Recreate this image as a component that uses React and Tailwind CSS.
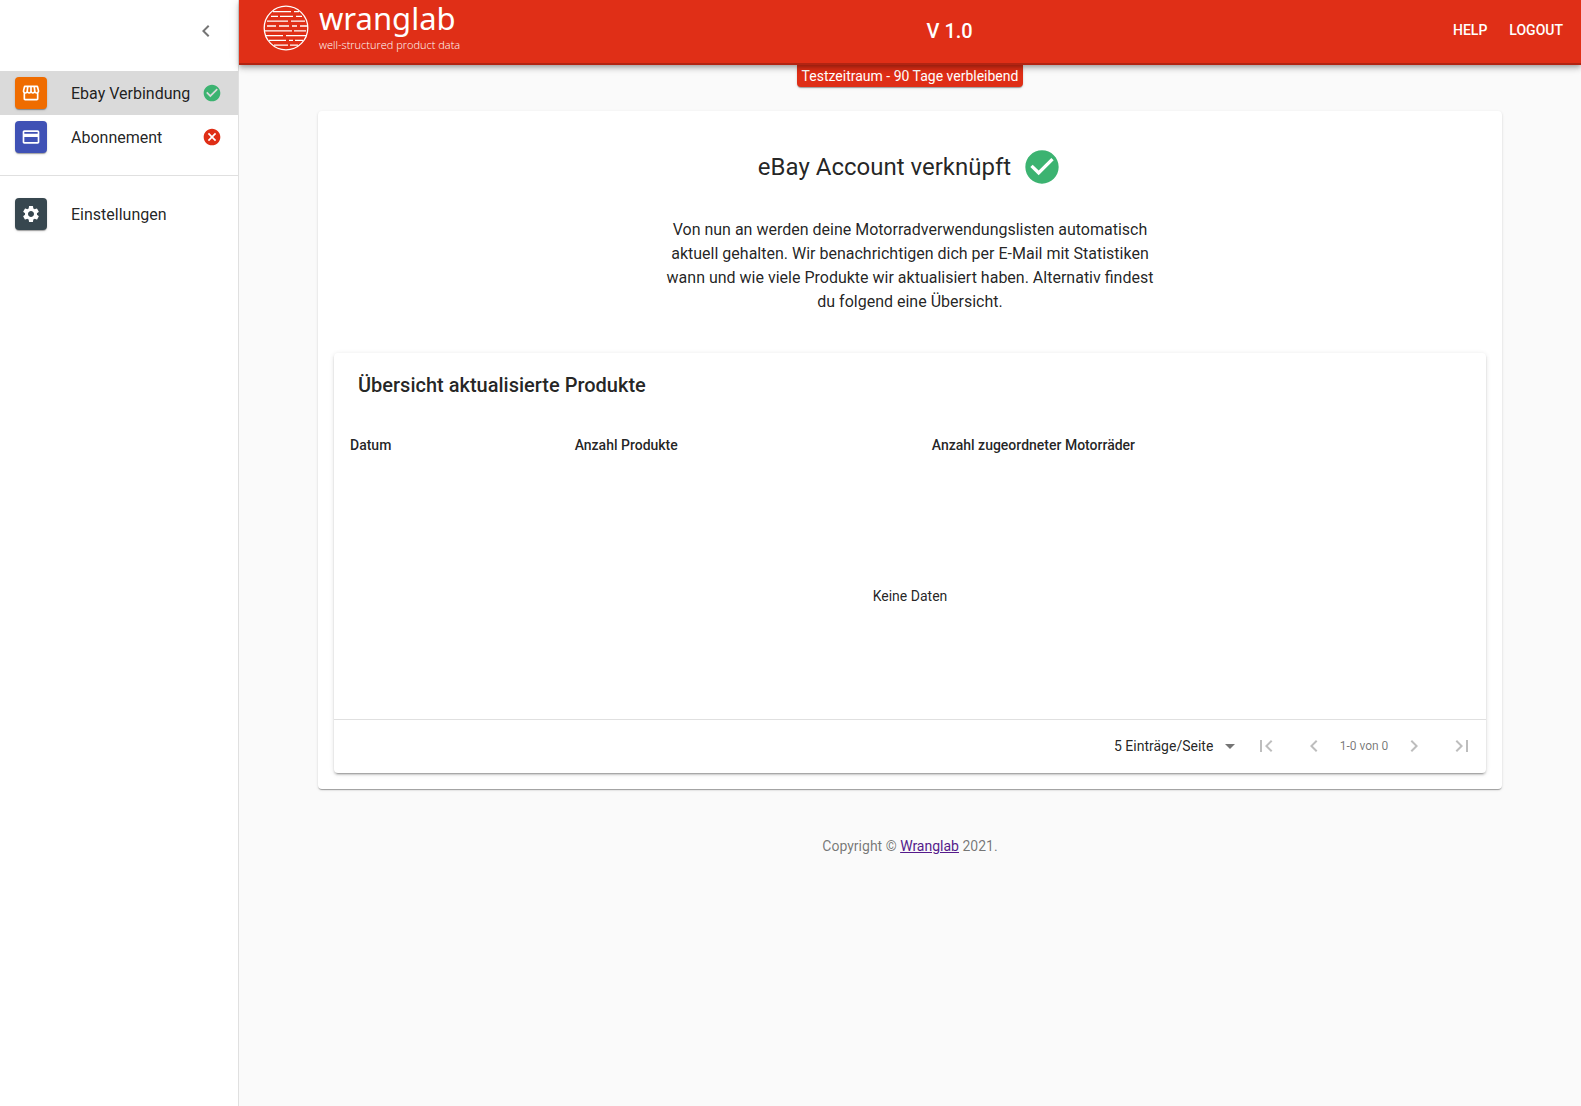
import React from "react";
import {
  MdChevronLeft,
  MdChevronRight,
  MdFirstPage,
  MdLastPage,
  MdCheckCircle,
  MdCancel,
  MdSettings,
  MdArrowDropDown,
  MdPayment,
} from "react-icons/md";

const paperShadow =
  "shadow-[0_2px_1px_-1px_rgba(0,0,0,0.2),0_1px_1px_0_rgba(0,0,0,0.14),0_1px_3px_0_rgba(0,0,0,0.12)]";
const raisedShadow =
  "shadow-[0_3px_1px_-2px_rgba(0,0,0,0.2),0_2px_2px_0_rgba(0,0,0,0.14),0_1px_5px_0_rgba(0,0,0,0.12)]";

function StoreIcon() {
  return (
    <svg viewBox="0 0 24 24" className="size-5" fill="currentColor" aria-hidden="true">
      <path d="M21.9 8.89l-1.05-4.37c-.22-.9-1-1.52-1.91-1.52H5.05c-.9 0-1.69.63-1.9 1.52L2.1 8.89c-.24 1.02-.02 2.06.62 2.88.08.11.19.19.28.29V19c0 1.1.9 2 2 2h14c1.1 0 2-.9 2-2v-6.94c.09-.09.2-.18.28-.28.64-.82.87-1.87.62-2.89zm-2.99-3.9l1.05 4.37c.1.42.01.84-.25 1.17-.14.18-.44.47-.94.47-.61 0-1.14-.49-1.21-1.14L16.98 5l1.93-.01zM13 5h1.96l.54 4.52c.05.39-.07.78-.33 1.07-.22.26-.54.41-.95.41-.67 0-1.22-.59-1.22-1.31V5zM8.49 9.52L9.04 5H11v4.69c0 .72-.55 1.31-1.29 1.31-.34 0-.65-.15-.89-.41-.25-.29-.37-.68-.33-1.07zm-4.45-.16L5.05 5h1.97l-.58 4.86c-.08.65-.6 1.14-1.21 1.14-.49 0-.8-.29-.93-.47-.27-.32-.36-.75-.26-1.17zM5 19v-6.03c.08.01.15.03.23.03.87 0 1.66-.36 2.24-.95.6.6 1.4.95 2.31.95.87 0 1.65-.36 2.23-.93.59.57 1.39.93 2.29.93.84 0 1.64-.35 2.24-.95.58.59 1.37.95 2.24.95.08 0 .15-.02.23-.03V19H5z" />
    </svg>
  );
}

function NavItem({ label, icon, tile, status, selected }) {
  return (
    <a
      href="#"
      aria-current={selected ? "page" : undefined}
      className={`flex h-11 items-center pl-[15px] pr-4 text-base ${selected ? "bg-[#dadada]" : ""}`}
    >
      <span className={`flex size-8 items-center justify-center rounded text-white ${paperShadow} ${tile}`}>
        {icon}
      </span>
      <span className="ml-6 flex-1 pt-0.5 whitespace-nowrap">{label}</span>
      {status}
    </a>
  );
}

function LogoMark() {
  return (
    <svg viewBox="0 0 46 46" className="size-[46px]" fill="none" stroke="white" strokeWidth="1.3" aria-hidden="true">
      <circle cx="23" cy="23" r="21.8" />
      <path d="M10 6.600h18M31 6.600h5M8 11.400h7M17 11.400h13M33 11.400h6M4 16.200h21M28 16.200h14M4 21h9M16 21h10M29 21h5M37 21h7M2 25.800h27M31 25.800h12M3 30.600h17M23 30.600h20M6 35.400h17M26 35.400h4M32 35.400h8M11 40.200h14M27 40.200h8" />
    </svg>
  );
}

function Sidebar() {
  return (
    <aside className="w-[239px] shrink-0 border-r border-black/12 bg-white">
      <div className="flex h-[71px] items-center justify-end pr-5 pb-[9px]">
        <button type="button" aria-label="Menü schließen" className="text-black/54">
          <MdChevronLeft size={24} />
        </button>
      </div>
      <nav>
        <NavItem
          selected
          label="Ebay Verbindung"
          tile="bg-[#ef6c00]"
          icon={<StoreIcon />}
          status={<MdCheckCircle size={20} className="text-[#3cb371]" />}
        />
        <NavItem
          label="Abonnement"
          tile="bg-[#3f51b5]"
          icon={<MdPayment size={20} />}
          status={<MdCancel size={20} className="text-[#df2e16]" />}
        />
        <hr className="my-4 border-black/12" />
        <NavItem label="Einstellungen" tile="bg-[#37474f]" icon={<MdSettings size={20} />} />
      </nav>
    </aside>
  );
}

function Header() {
  return (
    <header className="relative z-10 flex h-[65px] items-start border-b-2 border-[#b22412] bg-[#e02f17] text-white shadow-[0_2px_4px_-1px_rgba(0,0,0,0.2),0_4px_5px_0_rgba(0,0,0,0.14),0_1px_10px_0_rgba(0,0,0,0.12)]">
      <a href="#" className="flex items-start gap-2.5 pt-[5px] pl-6">
        <LogoMark />
        <span className="flex flex-col gap-1">
          <span className="font-['Noto_Sans',sans-serif] text-[31px] leading-[26px]">wranglab</span>
          <span className="font-['Open_Sans',sans-serif] text-[11px] leading-5 font-light">
            well-structured product data
          </span>
        </span>
      </a>
      <h1 className="flex-1 pl-2 text-center text-xl leading-[62px] font-medium">V 1.0</h1>
      <nav className="flex gap-[22px] pr-[18px] pl-[22px] text-sm leading-[60px] font-medium">
        <button type="button">HELP</button>
        <button type="button">LOGOUT</button>
      </nav>
    </header>
  );
}

function Pager() {
  const button = "flex size-12 items-center justify-center text-black/26";
  return (
    <div className="flex h-[53px] items-center justify-end">
      <div className="relative flex items-center">
        <select
          aria-label="Einträge pro Seite"
          className="appearance-none bg-transparent pr-7 text-sm"
          defaultValue="5"
        >
          <option value="5">5 Einträge/Seite</option>
        </select>
        <MdArrowDropDown size={24} className="pointer-events-none absolute right-0 text-black/54" />
      </div>
      <button type="button" disabled aria-label="Erste Seite" className={button}>
        <MdFirstPage size={24} />
      </button>
      <button type="button" disabled aria-label="Vorherige Seite" className={button}>
        <MdChevronLeft size={24} />
      </button>
      <span className="min-w-[52px] text-center text-xs text-black/54">1-0 von 0</span>
      <button type="button" disabled aria-label="Nächste Seite" className={button}>
        <MdChevronRight size={24} />
      </button>
      <button type="button" disabled aria-label="Letzte Seite" className={button}>
        <MdLastPage size={24} />
      </button>
    </div>
  );
}

export default function App() {
  return (
    <div className="flex min-h-screen bg-[#fafafa] font-['Roboto',sans-serif] text-black/87">
      <Sidebar />
      <div className="flex min-w-0 flex-1 flex-col">
        <Header />
        <p className={`self-center rounded-b bg-[#df2e16] px-[5px] text-sm leading-[22px] text-white ${paperShadow}`}>
          Testzeitraum - 90 Tage verbleibend
        </p>
        <main className="mx-auto w-full max-w-7xl px-12 pt-6">
          <section className={`rounded bg-white p-4 ${paperShadow}`}>
            <div className="flex items-center justify-center gap-[11px] pt-5">
              <h2 className="text-2xl">eBay Account verknüpft</h2>
              <MdCheckCircle size={40} className="text-[#3cb371]" />
            </div>
            <p className="mx-auto mt-[31px] mb-[39px] max-w-[500px] text-center text-base">
              Von nun an werden deine Motorradverwendungslisten automatisch aktuell gehalten. Wir benachrichtigen
              dich per E-Mail mit Statistiken wann und wie viele Produkte wir aktualisiert haben. Alternativ findest
              du folgend eine Übersicht.
            </p>
            <div className={`rounded bg-white ${raisedShadow}`}>
              <h3 className="px-6 text-xl leading-[64px] font-medium">Übersicht aktualisierte Produkte</h3>
              <table className="w-full table-fixed text-sm">
                <colgroup>
                  <col className="w-[19.5%]" />
                  <col className="w-[31%]" />
                  <col />
                </colgroup>
                <thead>
                  <tr className="h-14 text-left">
                    <th className="px-4 font-medium">Datum</th>
                    <th className="px-4 font-medium">Anzahl Produkte</th>
                    <th className="px-4 font-medium">Anzahl zugeordneter Motorräder</th>
                  </tr>
                </thead>
                <tbody>
                  <tr className="h-[246px] border-b border-black/12">
                    <td colSpan={3} className="text-center">
                      Keine Daten
                    </td>
                  </tr>
                </tbody>
              </table>
              <Pager />
            </div>
          </section>
        </main>
        <footer className="pt-[47px] text-center text-sm text-black/54">
          Copyright ©{" "}
          <a href="#" className="text-[#551a8b] underline">
            Wranglab
          </a>{" "}
          2021.
        </footer>
      </div>
    </div>
  );
}
